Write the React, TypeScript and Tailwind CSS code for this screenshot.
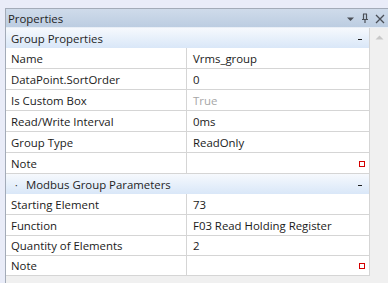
import React from "react";

type Row = { name: string; value?: string; muted?: boolean; note?: boolean; h?: string };

const groupRows: Row[] = [
  { name: "Name", value: "Vrms_group" },
  { name: "DataPoint.SortOrder", value: "0" },
  { name: "Is Custom Box", value: "True", muted: true },
  { name: "Read/Write Interval", value: "0ms" },
  { name: "Group Type", value: "ReadOnly" },
  { name: "Note", note: true },
];

const modbusRows: Row[] = [
  { name: "Starting Element", value: "73", h: "h-[21px]" },
  { name: "Function", value: "F03 Read Holding Register", h: "h-[21px]" },
  { name: "Quantity of Elements", value: "2", h: "h-[20px]" },
  { name: "Note", note: true, h: "h-[20px]" },
];

const GroupHeader = ({ title, dot }: { title: string; dot?: boolean }) => (
  <div className="h-[20px] flex items-center pt-[1px] bg-gradient-to-b from-[#f6f9fd] to-[#d9e7f8] text-[#1e1e1e]">
    {dot ? (
      <>
        <span className="w-[20px] pl-[9px] text-[10px] leading-none">·</span>
        <span>{title}</span>
      </>
    ) : (
      <span className="pl-[5px]">{title}</span>
    )}
    <span className="ml-auto mr-[7px] mt-[2px] w-[4px] h-[1px] bg-[#1e1e1e]" />
  </div>
);

const PropRow = ({ row }: { row: Row }) => (
  <div className={`${row.h ?? "h-[21px]"} flex border-b border-[#d5d5d5] bg-white`}>
    <div className="w-[181px] shrink-0 border-r border-[#d5d5d5] pl-[5px] pt-[1px] flex items-center text-[#1a1a1a]">
      {row.name}
    </div>
    <div className="flex-1 flex items-center pl-[6px] pr-[4px] pt-[1px]">
      <span className={row.muted ? "text-[#a6a6a6]" : "text-[#1a1a1a]"}>{row.value}</span>
      {row.note && <span className="ml-auto w-[6px] h-[6px] border border-[#d40000]" />}
    </div>
  </div>
);

export default function App() {
  return (
    <div
      className="w-[388px] h-[283px] bg-[#e9ecf8] pt-[8px] pl-[5px] overflow-hidden text-[11.4px] leading-none"
      style={{ fontFamily: '"Open Sans", "Noto Sans", sans-serif' }}
    >
      <div className="h-full flex flex-col border-t border-l border-[#a3abb8]">
        {/* Title bar */}
        <div className="h-[19px] shrink-0 flex items-center pt-[1px] bg-gradient-to-b from-[#cfdbea] to-[#bccde1] border-b border-[#e8eef6] text-[#1e1e1e] pl-[2px]">
          <span>Properties</span>
          <div className="ml-auto flex items-center gap-[6px] pr-[3px]">
            <svg width="9" height="6" viewBox="0 0 9 6">
              <path d="M1 1.5h7L4.5 5z" fill="#4a4f57" />
            </svg>
            <svg width="8" height="11" viewBox="0 0 8 11">
              <path d="M2 1h4M2.5 1v5M5.5 1v5M1 6.5h6M4 6.5V10" stroke="#4a4f57" strokeWidth="1.2" fill="none" />
            </svg>
            <svg width="10" height="10" viewBox="0 0 10 10">
              <path d="M1 1l8 8M9 1l-8 8" stroke="#4a4f57" strokeWidth="1.3" />
            </svg>
          </div>
        </div>

        {/* Body */}
        <div className="flex-1 flex bg-[#f0f0f0]">
          <div className="w-[364px] self-start border-r border-[#d5d5d5]">
            <GroupHeader title="Group Properties" />
            {groupRows.map((r, i) => (
              <PropRow key={i} row={r} />
            ))}
            <GroupHeader title="Modbus Group Parameters" dot />
            {modbusRows.map((r, i) => (
              <PropRow key={i} row={r} />
            ))}
          </div>
          <div className="flex-1 flex justify-center pt-[7px]">
            <svg width="9" height="5" viewBox="0 0 9 5">
              <path d="M0.5 4.5L4.5 0.5 8.5 4.5z" fill="#c8c8c8" />
            </svg>
          </div>
        </div>
      </div>
    </div>
  );
}
